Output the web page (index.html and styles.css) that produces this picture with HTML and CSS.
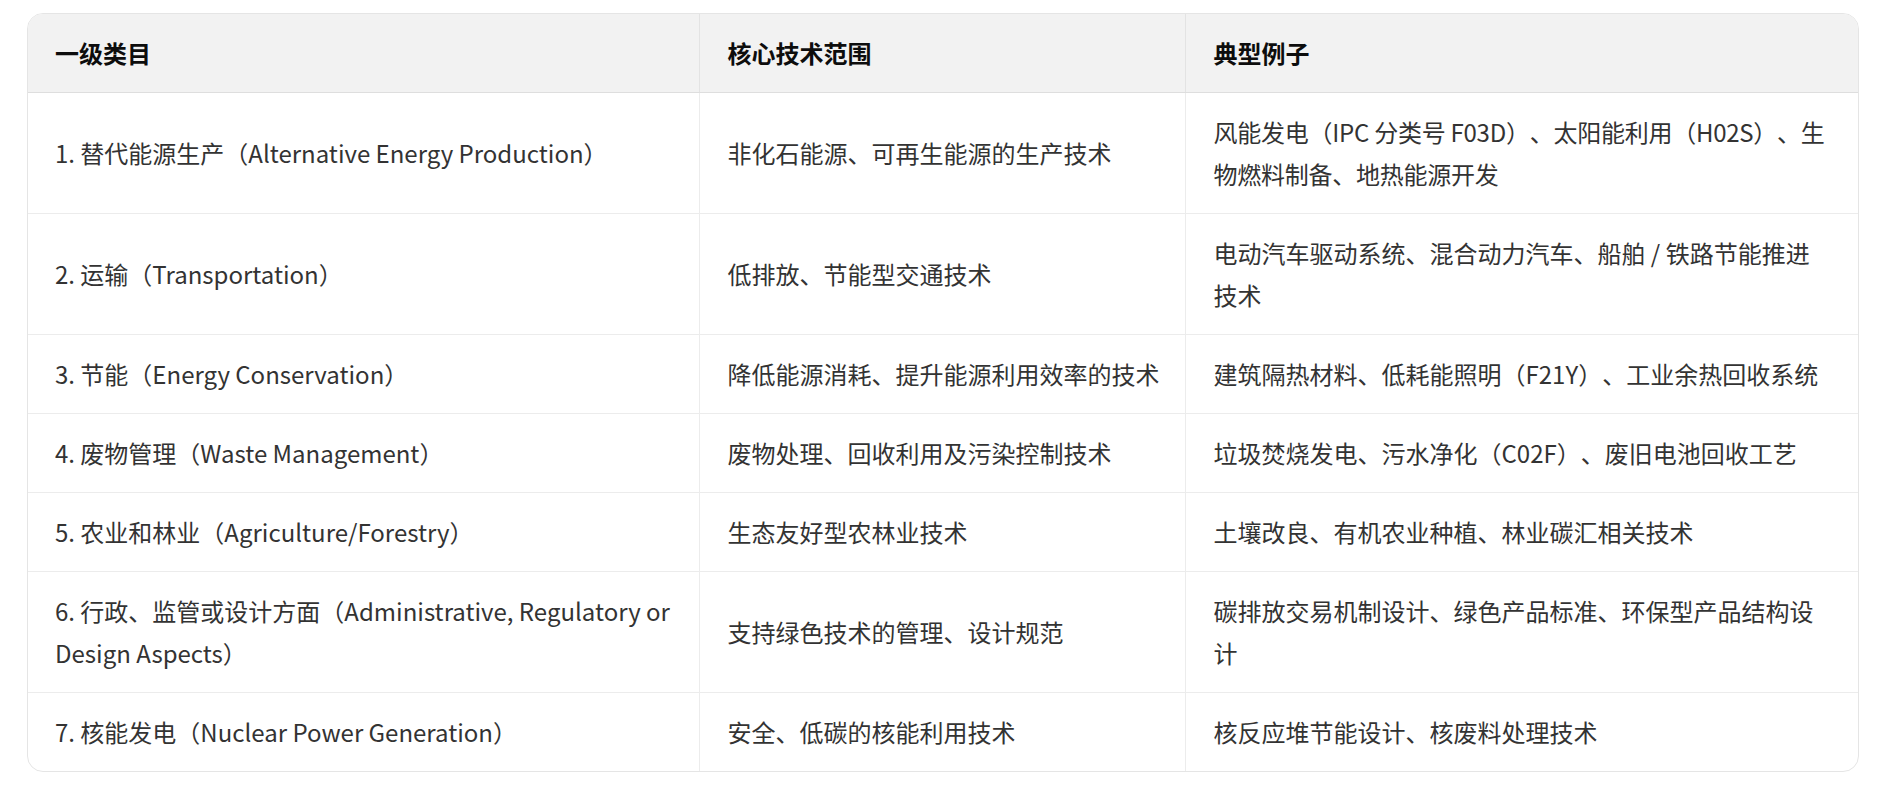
FILE: index.html
```html
<!DOCTYPE html>
<html lang="zh-CN">
<head>
<meta charset="utf-8">
<title>绿色技术分类</title>
<link rel="stylesheet" href="styles.css">
</head>
<body>
<div class="table-wrap">
  <table class="tech-table">
    <colgroup>
      <col class="c1">
      <col class="c2">
      <col class="c3">
    </colgroup>
    <thead>
      <tr>
        <th>一级类目</th>
        <th>核心技术范围</th>
        <th>典型例子</th>
      </tr>
    </thead>
    <tbody>
      <tr>
        <td>1. 替代能源生产（Alternative Energy Production）</td>
        <td>非化石能源、可再生能源的生产技术</td>
        <td class="tight">风能发电（IPC 分类号 F03D）、太阳能利用（H02S）、生物燃料制备、地热能源开发</td>
      </tr>
      <tr>
        <td>2. 运输（Transportation）</td>
        <td>低排放、节能型交通技术</td>
        <td>电动汽车驱动系统、混合动力汽车、船舶 / 铁路节能推进技术</td>
      </tr>
      <tr>
        <td>3. 节能（Energy Conservation）</td>
        <td>降低能源消耗、提升能源利用效率的技术</td>
        <td>建筑隔热材料、低耗能照明（F21Y）、工业余热回收系统</td>
      </tr>
      <tr>
        <td>4. 废物管理（Waste Management）</td>
        <td>废物处理、回收利用及污染控制技术</td>
        <td>垃圾焚烧发电、污水净化（C02F）、废旧电池回收工艺</td>
      </tr>
      <tr>
        <td>5. 农业和林业（Agriculture/Forestry）</td>
        <td>生态友好型农林业技术</td>
        <td>土壤改良、有机农业种植、林业碳汇相关技术</td>
      </tr>
      <tr>
        <td>6. 行政、监管或设计方面（Administrative, Regulatory or Design Aspects）</td>
        <td>支持绿色技术的管理、设计规范</td>
        <td>碳排放交易机制设计、绿色产品标准、环保型产品结构设计</td>
      </tr>
      <tr>
        <td>7. 核能发电（Nuclear Power Generation）</td>
        <td>安全、低碳的核能利用技术</td>
        <td>核反应堆节能设计、核废料处理技术</td>
      </tr>
    </tbody>
  </table>
</div>
</body>
</html>
```

FILE: styles.css
```css
html, body {
  background: #ffffff;
}

body {
  margin: 13px 22px 16px 27px;
  font-family: "Noto Sans CJK SC", "Noto Sans", sans-serif;
  color: #333333;
}

.table-wrap {
  border: 1px solid #e5e5e5;
  border-radius: 16px;
  overflow: hidden;
}

.tech-table {
  width: 100%;
  border-collapse: collapse;
  table-layout: fixed;
  font-size: 24px;
  text-spacing-trim: space-all;
}

.tech-table .c1 { width: 671px; }
.tech-table .c2 { width: 486px; }
.tech-table .c3 { width: auto; }

.tech-table th,
.tech-table td {
  padding: 18px 20px 18px 27px;
  line-height: 42px;
  text-align: left;
  vertical-align: middle;
  border-right: 1px solid #ececec;
  border-bottom: 1px solid #ececec;
}

.tech-table th:nth-child(n+2),
.tech-table td:nth-child(n+2) {
  padding-left: 28px;
}

.tech-table th:nth-child(3),
.tech-table td:nth-child(3) {
  padding-right: 28px;
}

.tech-table .tight {
  letter-spacing: -0.25px;
}

.tech-table th {
  background: #f2f2f2;
  color: #0d0d0d;
  font-weight: 700;
  border-bottom-color: #dedede;
  border-right-color: #e3e3e3;
}

.tech-table th:last-child,
.tech-table td:last-child {
  border-right: none;
}

.tech-table tbody tr:last-child td {
  border-bottom: none;
}
```
